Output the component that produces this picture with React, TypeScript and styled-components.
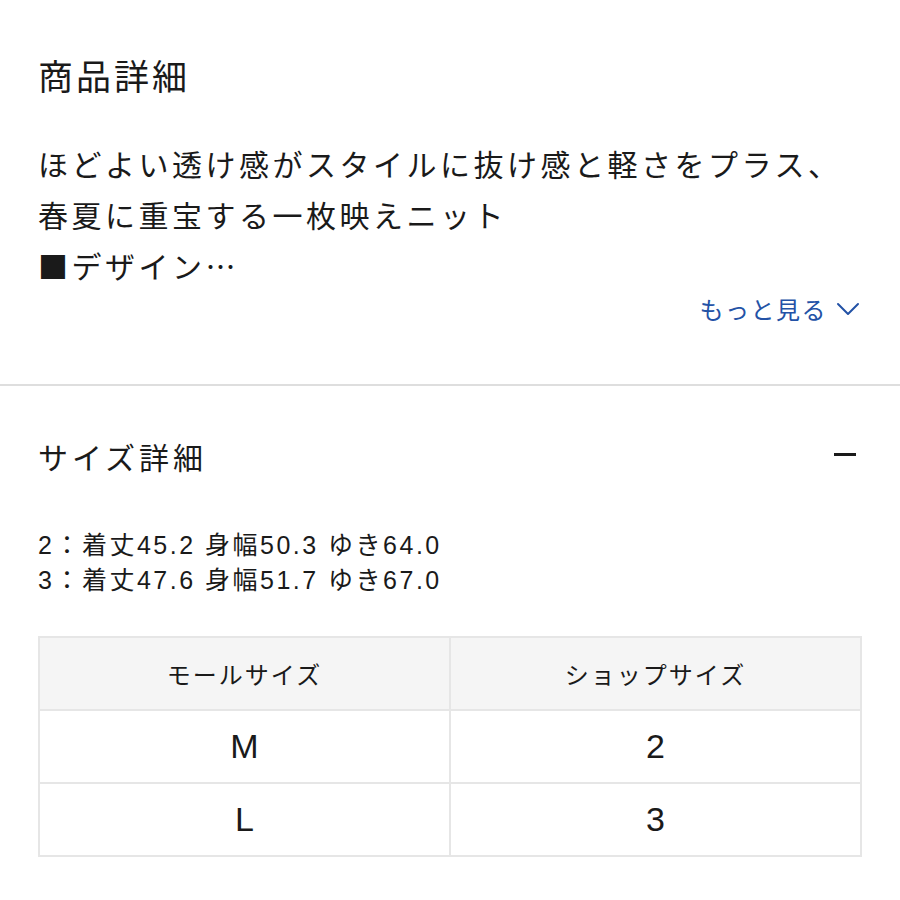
import React from "react";
import styled, { createGlobalStyle } from "styled-components";

const Global = createGlobalStyle`
  html, body { margin: 0; padding: 0; background: #fff; }
  body { font-family: "Liberation Sans", "Noto Sans CJK JP", sans-serif; color: #1a1a1a; }
`;

const Page = styled.div`
  width: 900px;
  background: #fff;
`;

const Section = styled.section<{ $pt: number; $pb: number }>`
  padding: ${(p) => p.$pt}px 38px ${(p) => p.$pb}px 38px;
`;

const Title = styled.h2<{ $size: number; $ls: number }>`
  margin: 0;
  font-family: "Noto Sans CJK JP", sans-serif;
  font-size: ${(p) => p.$size}px;
  font-weight: 400;
  line-height: 44px;
  letter-spacing: ${(p) => p.$ls}px;
`;

const Body = styled.p`
  margin: 41px 0 0;
  font-family: "Noto Sans CJK JP", sans-serif;
  font-size: 30px;
  line-height: 51px;
  letter-spacing: 3.5px;
`;

const MoreRow = styled.div`
  display: flex;
  justify-content: flex-end;
  margin-top: 0;
  padding-right: 2px;
`;

const MoreLink = styled.a`
  display: inline-flex;
  align-items: center;
  gap: 9px;
  color: #2352a6;
  font-family: "Noto Sans CJK JP", sans-serif;
  font-size: 24px;
  line-height: 36px;
  letter-spacing: 1.5px;
  text-decoration: none;
`;

const Divider = styled.hr`
  margin: 0;
  border: none;
  height: 2px;
  background: #dedede;
`;

const Header = styled.div`
  display: flex;
  align-items: center;
  justify-content: space-between;
`;

const Specs = styled.div`
  margin-top: 50px;
  font-size: 25px;
  line-height: 35px;
  letter-spacing: 2.5px;
`;

const Table = styled.div`
  margin-top: 38px;
  display: grid;
  grid-template-columns: 1fr 1fr;
  border-top: 2px solid #e6e6e6;
  border-left: 2px solid #e6e6e6;
`;

const Cell = styled.div<{ $head?: boolean }>`
  height: 71px;
  display: flex;
  align-items: center;
  justify-content: center;
  border-right: 2px solid #e6e6e6;
  border-bottom: 2px solid #e6e6e6;
  background: ${(p) => (p.$head ? "#f5f5f5" : "#fff")};
  font-size: ${(p) => (p.$head ? "24px" : "34px")};
  letter-spacing: ${(p) => (p.$head ? "2px" : "0")};
`;

const MinusWrap = styled.span`
  display: inline-flex;
  margin: 0 5px 4px 0;
`;

const Chevron = () => (
  <svg width="24" height="16" viewBox="0 0 24 16" fill="none">
    <path d="M2 3 L12 13 L22 3" stroke="#2352a6" strokeWidth="2" strokeLinecap="round" strokeLinejoin="round" />
  </svg>
);

const Minus = () => (
  <MinusWrap>
    <svg width="24" height="24" viewBox="0 0 24 24">
      <rect x="1" y="11" width="22" height="3" fill="#1a1a1a" />
    </svg>
  </MinusWrap>
);

export default function App() {
  return (
    <Page>
      <Global />
      <Section $pt={53} $pb={57}>
        <Title $size={35} $ls={3}>商品詳細</Title>
        <Body>
          ほどよい透け感がスタイルに抜け感と軽さをプラス、
          <br />
          春夏に重宝する一枚映えニット
          <br />
          ■デザイン…
        </Body>
        <MoreRow>
          <MoreLink href="#">
            もっと見る
            <Chevron />
          </MoreLink>
        </MoreRow>
      </Section>
      <Divider />
      <Section $pt={48} $pb={40}>
        <Header>
          <Title $size={30} $ls={4}>サイズ詳細</Title>
          <Minus />
        </Header>
        <Specs>
          2：着丈45.2 身幅50.3 ゆき64.0
          <br />
          3：着丈47.6 身幅51.7 ゆき67.0
        </Specs>
        <Table>
          <Cell $head>モールサイズ</Cell>
          <Cell $head>ショップサイズ</Cell>
          <Cell>M</Cell>
          <Cell>2</Cell>
          <Cell>L</Cell>
          <Cell>3</Cell>
        </Table>
      </Section>
    </Page>
  );
}
